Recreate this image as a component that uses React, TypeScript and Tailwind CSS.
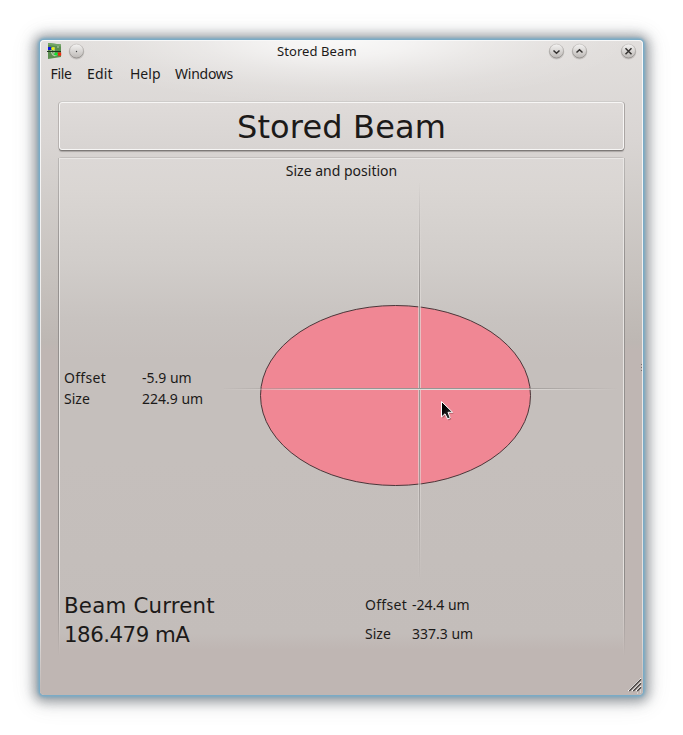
import React from "react";

const labelFont = "font-['Noto_Sans','Open_Sans',sans-serif] text-[14px] leading-[20px]";
const displayFont = "font-['DejaVu_Sans',sans-serif]";

function TitleButton({ children }: { children: React.ReactNode }) {
  return (
    <svg width="17" height="17" viewBox="0 0 17 17" className="shrink-0">
      <defs>
        <linearGradient id="btn" x1="0" y1="0" x2="0" y2="1">
          <stop offset="0" stopColor="#f4f3f2" />
          <stop offset="1" stopColor="#bdb9b6" />
        </linearGradient>
        <linearGradient id="rim" x1="0" y1="0" x2="0" y2="1">
          <stop offset="0" stopColor="#cfccca" />
          <stop offset="1" stopColor="#93908d" />
        </linearGradient>
      </defs>
      <circle cx="8.5" cy="8.7" r="7.8" fill="#a5a19e" opacity=".4" />
      <circle cx="8.5" cy="8" r="7" fill="url(#btn)" stroke="url(#rim)" strokeWidth="1" />
      {children}
    </svg>
  );
}

function AppIcon() {
  return (
    <svg width="16" height="16" viewBox="0 0 16 16" className="shrink-0">
      <path d="M1 0L14 1.5V14L1 16Z" fill="#5b8f50" />
      <path d="M1 0L14 1.5V3.5L1 2Z" fill="#73a568" />
      <path d="M4 7C5 14 9 13 10 11M7 4V11M10 4H12" stroke="#b9ceb0" fill="none" strokeWidth="1.2" />
      <path d="M0 8.5H14" stroke="#203a20" strokeWidth="1" />
      <rect x="1" y="4" width="3" height="3" fill="#0814dc" />
      <circle cx="6" cy="5.6" r="1.6" fill="#f2ef18" />
      <circle cx="9" cy="11" r="1.6" fill="#0ee62c" />
      <rect x="11" y="9.5" width="3.2" height="3.2" fill="#ec2a10" />
    </svg>
  );
}

function BeamPlot() {
  return (
    <svg width="396" height="394" viewBox="224 183 396 394" className="shrink-0">
      <defs>
        <linearGradient id="vDark" gradientUnits="userSpaceOnUse" x1="0" y1="180" x2="0" y2="582">
          <stop offset="0" stopColor="#989492" stopOpacity="0" />
          <stop offset=".3" stopColor="#989492" />
          <stop offset=".7" stopColor="#989492" />
          <stop offset="1" stopColor="#989492" stopOpacity="0" />
        </linearGradient>
        <linearGradient id="vLight" gradientUnits="userSpaceOnUse" x1="0" y1="180" x2="0" y2="582">
          <stop offset="0" stopColor="#e2dedb" stopOpacity="0" />
          <stop offset=".3" stopColor="#e2dedb" stopOpacity=".65" />
          <stop offset=".7" stopColor="#e2dedb" stopOpacity=".65" />
          <stop offset="1" stopColor="#e2dedb" stopOpacity="0" />
        </linearGradient>
        <linearGradient id="hDark" gradientUnits="userSpaceOnUse" x1="218" y1="0" x2="618" y2="0">
          <stop offset="0" stopColor="#989492" stopOpacity="0" />
          <stop offset=".3" stopColor="#989492" />
          <stop offset=".7" stopColor="#989492" />
          <stop offset="1" stopColor="#989492" stopOpacity="0" />
        </linearGradient>
        <linearGradient id="hLight" gradientUnits="userSpaceOnUse" x1="218" y1="0" x2="618" y2="0">
          <stop offset="0" stopColor="#e2dedb" stopOpacity="0" />
          <stop offset=".3" stopColor="#e2dedb" />
          <stop offset=".7" stopColor="#e2dedb" />
          <stop offset="1" stopColor="#e2dedb" stopOpacity="0" />
        </linearGradient>
        <linearGradient id="cursor" x1="0" y1="0" x2="1" y2="1">
          <stop offset=".3" stopColor="#000" />
          <stop offset="1" stopColor="#444" />
        </linearGradient>
      </defs>
      <ellipse cx="395.5" cy="395.5" rx="135" ry="90" fill="#f08794" stroke="#4b3639" strokeWidth="1" />
      <rect x="418" y="183" width="1" height="394" fill="url(#vLight)" />
      <rect x="420" y="183" width="1" height="394" fill="url(#vLight)" />
      <rect x="419" y="183" width="1" height="394" fill="url(#vDark)" />
      <rect x="224" y="388" width="394" height="1" fill="url(#hDark)" />
      <rect x="224" y="389" width="394" height="1" fill="url(#hLight)" />
      <path d="M442.5 403V418.5L446 415.4L448.6 420.5L451.3 419.2L449 413.8H453.8Z" fill="#6b3a42" opacity=".45" />
      <path d="M441.5 401.5V417L445 413.8L447.6 419L450.2 417.8L448 412.3H452.6Z" fill="url(#cursor)" stroke="#fff" strokeWidth="1" />
    </svg>
  );
}

function SideEdge({ flip = false }: { flip?: boolean }) {
  return (
    <div className={flip ? "flex w-[2px] flex-row-reverse" : "flex w-[2px]"}>
      <i className="w-px bg-[linear-gradient(to_bottom,#bab7b5,#979391_20%,#8e8a88_85%,transparent)]" />
      <i className="w-px bg-[linear-gradient(to_bottom,#e9e7e5,#e4e1de_85%,transparent)]" />
    </div>
  );
}

export default function App() {
  return (
    <div className={`h-[735px] w-[683px] overflow-hidden bg-white pt-10 pl-10 text-[#1c1a19] ${labelFont}`}>
      <main className="relative flex h-[655px] w-[603px] flex-col rounded-[4px] bg-[radial-gradient(ellipse_290px_64px_at_50%_0,rgba(255,255,255,.8),rgba(255,255,255,.62)_25%,rgba(255,255,255,.32)_50%,rgba(255,255,255,.1)_75%,transparent),linear-gradient(to_bottom,#e2dfdd_0,#d9d5d3_100px,#d2cecb_150px,#c7c2be_235px,#bdb7b3_302px,#bfb6b3_310px,#bfb6b3)] shadow-[0_0_0_1px_#7aabc6,0_0_3px_2px_#78aac6,0_1px_12px_6px_rgba(72,82,90,.54),0_2px_24px_5px_rgba(100,100,100,.16)]">
        <div className="pointer-events-none absolute inset-0 rounded-[4px] border border-b-0 border-[#f8f8f8] [mask-image:linear-gradient(to_bottom,black,rgba(0,0,0,.6)_90%,transparent)]" />
        <header className="flex h-[22px] items-center pr-[6px] pl-[7px]">
          <AppIcon />
          <div className="ml-[5px] flex">
            <TitleButton><circle cx="8.5" cy="8.5" r=".7" fill="#444" /></TitleButton>
          </div>
          <h1 className="ml-[192px] w-[80px] whitespace-nowrap text-[13px] tracking-[0.08px]">Stored Beam</h1>
          <div className="ml-auto flex">
            <TitleButton><path d="M5.5 7.5L8.5 10.3L11.5 7.5" fill="none" stroke="#343230" strokeWidth="1.5" /></TitleButton>
            <span className="w-[6px]" />
            <TitleButton><path d="M5.5 9.5L8.5 6.7L11.5 9.5" fill="none" stroke="#343230" strokeWidth="1.5" /></TitleButton>
            <span className="w-[32px]" />
            <TitleButton><path d="M5.5 5.2L11.5 11.2M11.5 5.2L5.5 11.2" fill="none" stroke="#343230" strokeWidth="1.5" /></TitleButton>
          </div>
        </header>
        <nav className="flex h-[24px] items-center pl-[10.5px]">
          <span className="w-[36.5px] tracking-[-0.3px]">File</span>
          <span className="w-[43px] tracking-[0.2px]">Edit</span>
          <span className="w-[45px]">Help</span>
          <span className="tracking-[-0.25px]">Windows</span>
        </nav>
        <section className={`mt-[16px] ml-[19px] flex h-[48px] w-[565px] items-center justify-center rounded-[3px] border border-[#f7f6f5] bg-[linear-gradient(#dfdbd9,#d8d4d2)] pt-[2px] text-[32px] tracking-[0.15px] shadow-[0_1px_0_#7d7977,0_2px_1px_#aaa6a4,-1px_0_0_#b8b4b2,1px_0_0_#aaa6a4,0_-1px_0_#ceccca] ${displayFont}`}>
          Stored Beam
        </section>
        <section className="mt-[7px] ml-[18px] flex h-[498px] w-[567px] rounded-t-[4px] border-t border-[#c3bfbd]">
          <SideEdge />
          <div className="flex w-[563px] flex-col border-t border-[#e9e7e5] bg-[linear-gradient(to_bottom,#dcd8d6_0,#dad6d3_30px,#d1cdca_103px,#c8c3c0_160px,#c5bfbc_200px,#c5bfbc_300px,#c4bebb_400px,#c3bdba_475px,#bfb6b3_490px)]">
            <h2 className="h-[24px] pt-[2px] text-center">Size and position</h2>
            <div className="flex h-[394px]">
              <dl className="grid w-[164px] grid-cols-[78px_1fr] content-center gap-y-px pl-[4px] pt-[17px]">
                <dt className="tracking-[0.3px]">Offset</dt><dd>-5.9 um</dd>
                <dt>Size</dt><dd>224.9 um</dd>
              </dl>
              <BeamPlot />
            </div>
            <div className="flex pl-[4px] pt-[13px]">
              <div className={`w-[301px] pt-px text-[21.33px] leading-[29px] ${displayFont}`}>
                <p className="tracking-[0.2px]">Beam Current</p>
                <p className="tracking-[-0.5px]">186.479 mA</p>
              </div>
              <dl className="grid grid-cols-[47px_1fr] content-start leading-[29px]">
                <dt className="tracking-[0.3px]">Offset</dt><dd>-24.4 um</dd>
                <dt>Size</dt><dd>337.3 um</dd>
              </dl>
            </div>
          </div>
          <SideEdge flip />
        </section>
        <svg className="absolute right-px bottom-px" width="14" height="16" viewBox="0 0 14 16">
          <path d="M0 13L13 0M4 13L13 4M8 13L13 8" stroke="#fff" strokeWidth="1" />
          <path d="M1.3 13L13 1.3M5.3 13L13 5.3M9.3 13L13 9.3" stroke="#45413f" strokeWidth="1.3" />
          <path d="M9 15h1M12 14h1M12 12h1" stroke="#eee" />
        </svg>
        <svg className="absolute top-[323px] right-0" width="2" height="9" viewBox="0 0 2 9">
          <path d="M.5 1v1M.5 4v1M.5 7v1" stroke="#77716f" />
        </svg>
      </main>
    </div>
  );
}
